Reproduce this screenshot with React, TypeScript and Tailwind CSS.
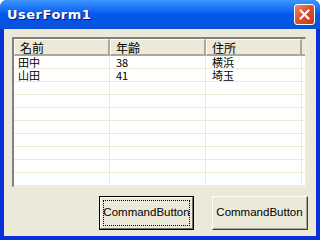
import React from 'react'

interface Row {
  name: string;
  age: string;
  addr: string;
}

const rows: Row[] = [
  { name: '田中', age: '38', addr: '横浜' },
  { name: '山田', age: '41', addr: '埼玉' },
  { name: '', age: '', addr: '' },
  { name: '', age: '', addr: '' },
  { name: '', age: '', addr: '' },
  { name: '', age: '', addr: '' },
  { name: '', age: '', addr: '' },
  { name: '', age: '', addr: '' },
  { name: '', age: '', addr: '' },
  { name: '', age: '', addr: '' },
]

const jp = { fontFamily: '"Noto Sans CJK JP", "Liberation Sans", sans-serif' }
const btnFont = { fontFamily: '"Liberation Sans", sans-serif' }

const CloseButton: React.FC = () => (
  <div className="w-[21px] h-[21px] rounded-[3px] border border-white bg-gradient-to-br from-[#e98a6a] via-[#d9502c] to-[#c43a18] flex items-center justify-center">
    <svg width="11" height="11" viewBox="0 0 11 11">
      <path d="M1.5 1.5 L9.5 9.5 M9.5 1.5 L1.5 9.5" stroke="white" strokeWidth="2" strokeLinecap="square" />
    </svg>
  </div>
)

const App: React.FC = () => {
  return (
    <div className="w-[320px] h-[240px] bg-white">
      <div className="w-[320px] h-[240px] flex flex-col rounded-t-[7px] overflow-hidden bg-[#0831d9]">
        <div className="h-[29px] flex items-center justify-between pl-[7px] pr-[5px] bg-gradient-to-b from-[#3d95ff] via-[#0058ee] to-[#0a50d8]">
          <span className="text-white font-bold text-[13px] tracking-[0.5px]" style={{ fontFamily: '"DejaVu Sans", sans-serif', textShadow: '1px 1px #0a1883' }}>
            UserForm1
          </span>
          <CloseButton />
        </div>
        <div className="flex-1 mx-[4px] mb-[4px] bg-[#ece9d8] pt-[8px] pl-[8px] flex flex-col" style={jp}>
          <div className="w-[294px] h-[150px] border-t-2 border-l-2 border-t-[#808080] border-l-[#808080] border-r border-b border-r-[#f1efe2] border-b-[#f1efe2] bg-white overflow-hidden">
            <div className="flex h-[17px] text-[12px] leading-[15px] text-black">
              {['名前', '年齢', '住所'].map((h) => (
                <div key={h} className="w-[96px] h-[17px] bg-[#ece9d8] border-t border-l border-t-white border-l-white border-r-2 border-b-2 border-r-[#aca899] border-b-[#aca899] pl-[5px] overflow-hidden">
                  {h}
                </div>
              ))}
              <div className="flex-1 bg-[#ece9d8] border-b-2 border-b-[#aca899]" />
            </div>
            {rows.map((r, i) => (
              <div key={i} className="flex h-[13px] border-b border-[#ece9d8] text-[11px] leading-[12px] text-black overflow-hidden">
                <div className="w-[96px] border-r border-[#ece9d8] pl-[4px] overflow-hidden">{r.name}</div>
                <div className="w-[96px] border-r border-[#ece9d8] pl-[6px] overflow-hidden">{r.age}</div>
                <div className="w-[96px] border-r border-[#ece9d8] pl-[6px] overflow-hidden">{r.addr}</div>
              </div>
            ))}
          </div>
          <div className="flex mt-[9px] pl-[87px] gap-[18px]" style={btnFont}>
            <button type="button" className="w-[95px] h-[34px] border border-black bg-[#ece9d8] p-0">
              <div className="w-full h-full border-t border-l border-white border-r border-b border-r-[#716f64] border-b-[#716f64] p-[2px]">
                <div className="w-full h-full border border-dotted border-black flex items-center justify-center text-[11.5px] text-black">
                  CommandButton
                </div>
              </div>
            </button>
            <button type="button" className="w-[96px] h-[34px] border-r border-b border-r-[#404040] border-b-[#404040] border-t border-l border-t-white border-l-white bg-[#ece9d8] p-0">
              <div className="w-full h-full border-r border-b border-r-[#aca899] border-b-[#aca899] flex items-center justify-center text-[11.5px] text-black">
                CommandButton
              </div>
            </button>
          </div>
        </div>
      </div>
    </div>
  )
}

export default App
